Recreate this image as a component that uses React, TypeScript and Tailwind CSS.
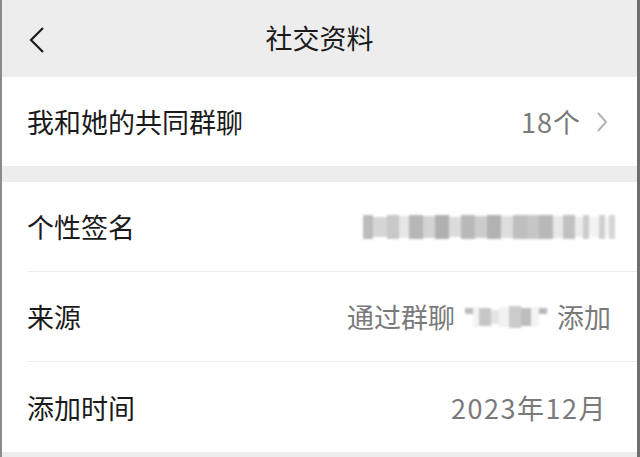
import React from 'react';

const font = { fontFamily: '"Noto Sans CJK SC", "Noto Sans", sans-serif' };

// pixelated blur blocks standing in for masked text
const Mosaic: React.FC<{ cells: string[]; className?: string }> = ({ cells, className }) => (
  <div className={`flex items-center blur-[1px] ${className ?? ''}`}>
    {cells.map((c, i) => (
      <span key={i} className={c} />
    ))}
  </div>
);

const signatureCells = [
  'w-[10px] h-[24px] bg-[#bcbcbc]',
  'w-[14px] h-[20px] bg-[#d6d6d6]',
  'w-[12px] h-[24px] bg-[#c8c8c8]',
  'w-[10px] h-[22px] bg-[#e6e6e6]',
  'w-[14px] h-[24px] bg-[#b6b6b6]',
  'w-[12px] h-[22px] bg-[#d4d4d4]',
  'w-[14px] h-[24px] bg-[#b0b0b0]',
  'w-[12px] h-[20px] bg-[#dcdcdc]',
  'w-[14px] h-[24px] bg-[#b9b9b9]',
  'w-[12px] h-[22px] bg-[#cdcdcd]',
  'w-[14px] h-[24px] bg-[#b2b2b2]',
  'w-[12px] h-[22px] bg-[#dedede]',
  'w-[14px] h-[24px] bg-[#bebebe]',
  'w-[12px] h-[24px] bg-[#c6c6c6]',
  'w-[14px] h-[24px] bg-[#b8b8b8]',
  'w-[10px] h-[22px] bg-[#e8e8e8]',
  'w-[12px] h-[24px] bg-[#c1c1c1]',
  'w-[8px] h-[20px] bg-[#ececec]',
  'w-[6px] h-[24px] bg-[#cdcdcd]',
  'w-[10px] h-[20px] bg-[#f3f3f3]',
  'w-[6px] h-[24px] bg-[#d0d0d0]',
  'w-[4px] h-[20px] bg-[#f4f4f4]',
  'w-[6px] h-[24px] bg-[#d6d6d6]',
];

const groupCells = [
  'w-[8px] h-[6px] self-start mt-[2px] bg-[#bcbcbc]',
  'w-[6px] h-[20px] bg-[#f4f4f4]',
  'w-[12px] h-[18px] bg-[#c6c6c6]',
  'w-[8px] h-[14px] bg-[#e4e4e4]',
  'w-[10px] h-[20px] bg-[#f2f2f2]',
  'w-[12px] h-[22px] bg-[#cbcbcb]',
  'w-[10px] h-[18px] bg-[#bdbdbd]',
  'w-[8px] h-[20px] bg-[#f4f4f4]',
  'w-[8px] h-[6px] self-start mt-[2px] bg-[#b8b8b8]',
];

const Row: React.FC<{ label: string; children: React.ReactNode; divider?: boolean }> = ({
  label,
  children,
  divider = true,
}) => (
  <div className="pl-[25px]">
    <div
      className={`h-[90px] flex items-center justify-between pr-[26px] ${
        divider ? 'border-b border-[#ececec]' : ''
      }`}
    >
      <span className="text-[27px] text-[#1b1b1b] leading-none">{label}</span>
      {children}
    </div>
  </div>
);

export default function App() {
  return (
    <div
      className="w-[640px] h-[457px] overflow-hidden bg-[#ededed] border-l-2 border-l-[#8a8a8a] border-r-[3px] border-r-[#6f6f6f] flex flex-col"
      style={font}
    >
      {/* Nav bar */}
      <div className="h-[77px] shrink-0 relative flex items-center justify-center">
        <svg
          className="absolute left-[24px] top-[26px]"
          width="22"
          height="28"
          viewBox="0 0 22 28"
          fill="none"
          stroke="#1b1b1b"
          strokeWidth="2.2"
        >
          <path d="M17 2 L5 14 L17 26" />
        </svg>
        <span className="text-[27px] text-[#1b1b1b] leading-none -mt-[2px]">社交资料</span>
      </div>

      {/* Common groups */}
      <div className="bg-white h-[89px] shrink-0 flex items-center justify-between pl-[25px] pr-[29px]">
        <span className="text-[27px] text-[#1b1b1b] leading-none">我和她的共同群聊</span>
        <div className="flex items-center gap-[15px]">
          <span className="text-[27px] text-[#7a7a7a] leading-none tracking-[1px]">18个</span>
          <svg width="12" height="22" viewBox="0 0 12 22" fill="none" stroke="#b4b4b4" strokeWidth="2">
            <path d="M2 2 L10 11 L2 20" />
          </svg>
        </div>
      </div>

      <div className="h-[16px] shrink-0" />

      {/* Profile rows */}
      <div className="bg-white shrink-0">
        <Row label="个性签名">
          <Mosaic cells={signatureCells} className="mr-[-4px]" />
        </Row>
        <Row label="来源">
          <div className="flex items-center text-[27px] text-[#7a7a7a] leading-none">
            <span>通过群聊</span>
            <Mosaic cells={groupCells} className="mx-[10px]" />
            <span>添加</span>
          </div>
        </Row>
        <Row label="添加时间" divider={false}>
          <span className="text-[27px] text-[#7a7a7a] leading-none mr-[4px] tracking-[1.5px]">2023年12月</span>
        </Row>
      </div>
    </div>
  );
}
